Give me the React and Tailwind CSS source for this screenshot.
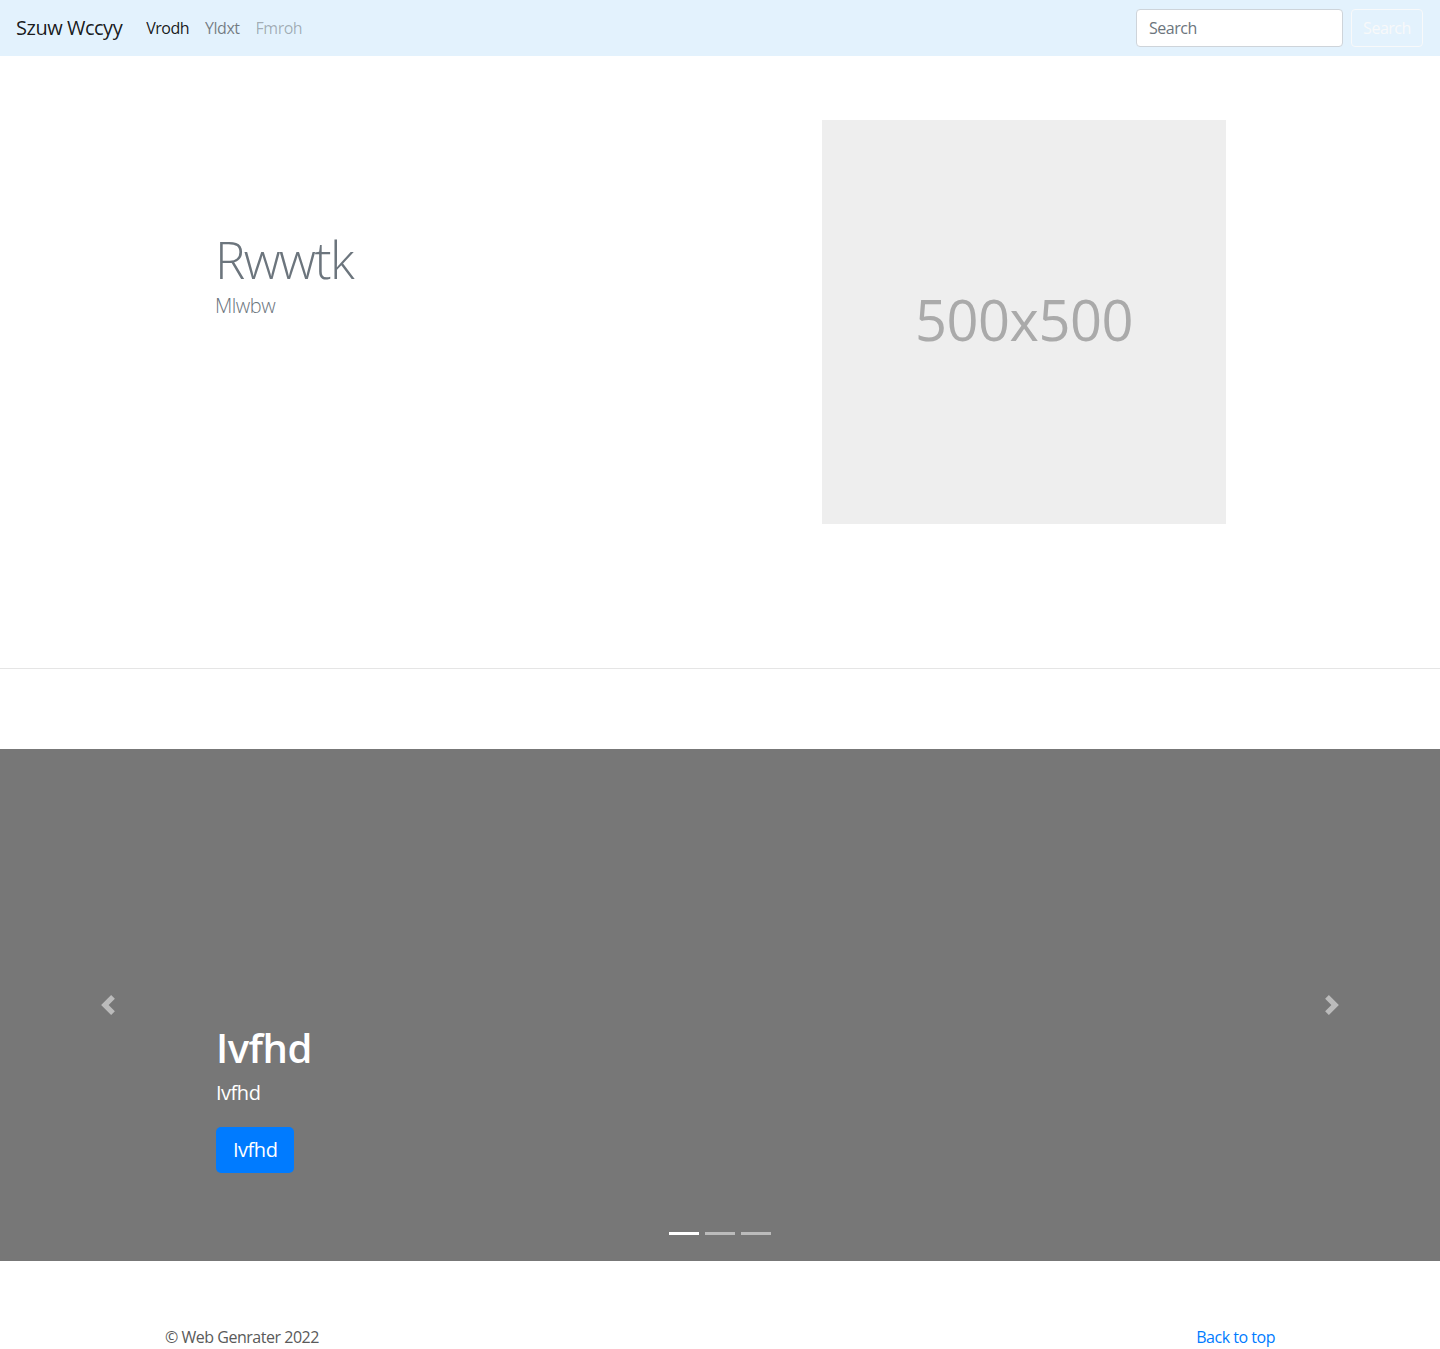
import React from 'react'

const font = { fontFamily: '"Open Sans", "Noto Sans", Arial, sans-serif' }

function Navbar() {
  return (
    <nav className="flex h-14 items-center bg-[#e3f2fd] pl-4 pr-[17px]">
      <a href="#" className="mr-4 text-[20px] leading-[30px] text-black/90">
        Szuw Wccyy
      </a>
      <ul className="flex items-center text-[16px] leading-6">
        <li><a href="#" className="block px-2 py-2 text-black/90">Vrodh</a></li>
        <li><a href="#" className="block px-2 py-2 text-black/50">Yldxt</a></li>
        <li><a href="#" className="block px-2 py-2 text-black/30">Fmroh</a></li>
      </ul>
      <form className="ml-auto flex items-center">
        <input
          type="search"
          placeholder="Search"
          className="mr-2 h-[38px] w-[207px] rounded border border-[#ced4da] bg-white px-3 text-[16px] text-[#495057] placeholder:text-[#6c757d] outline-none"
        />
        <button
          type="button"
          className="h-[38px] w-[72px] rounded border border-[#f8f9fa] text-[16px] text-[#f8f9fa]"
        >
          Search
        </button>
      </form>
    </nav>
  )
}

function Hero() {
  return (
    <section className="pt-16 pb-[144px]">
      <div className="mx-auto grid max-w-[1140px] grid-cols-2">
        <div className="pl-[65px] pt-[111px]">
          <h1 className="text-[51px] font-light leading-[56px] tracking-[-0.03em] text-[#6c757d]">Rwwtk</h1>
          <p className="mt-[4px] text-[20px] font-light leading-[30px] text-[#6c757d]">Mlwbw</p>
        </div>
        <div className="pl-[102px]">
          <div className="flex h-[404px] w-[404px] items-center justify-center bg-[#eee] pb-[6px]">
            <span className="text-[56px] leading-none text-[#aaa]">500x500</span>
          </div>
        </div>
      </div>
    </section>
  )
}

function Chevron({ dir }) {
  const d = dir === 'prev'
    ? 'M5.25 0l-4 4 4 4 1.5-1.5L4.25 4l2.5-2.5L5.25 0z'
    : 'M2.75 0l-1.5 1.5L3.75 4l-2.5 2.5L2.75 8l4-4-4-4z'
  return (
    <svg viewBox="0 0 8 8" className="h-5 w-5" fill="#fff">
      <path d={d} />
    </svg>
  )
}

function Carousel() {
  return (
    <section className="relative mt-20 flex h-[512px] flex-col justify-end bg-[#777] pb-[88px] pl-[216px]">
      <a href="#" className="absolute left-0 top-0 flex h-full w-[216px] items-center justify-center opacity-50">
        <Chevron dir="prev" />
      </a>
      <a href="#" className="absolute right-0 top-0 flex h-full w-[216px] items-center justify-center opacity-50">
        <Chevron dir="next" />
      </a>
      <div className="relative text-white">
        <h1 className="mb-[6px] text-[40px] font-semibold leading-[48px]">Ivfhd</h1>
        <p className="mb-[19px] text-[20px] leading-[30px]">Ivfhd</p>
        <a href="#" className="inline-block rounded-[5px] bg-[#007bff] px-[17px] py-[8px] text-[20px] leading-[30px] text-white">
          Ivfhd
        </a>
      </div>
      <ol className="absolute bottom-[26px] left-0 right-0 flex justify-center gap-[6px]">
        <li className="h-[3px] w-[30px] bg-white" />
        <li className="h-[3px] w-[30px] bg-white/50" />
        <li className="h-[3px] w-[30px] bg-white/50" />
      </ol>
    </section>
  )
}

function Footer() {
  return (
    <footer className="mx-auto flex max-w-[1140px] justify-between px-[15px] pt-16 pb-8 text-[16px] leading-6">
      <p className="text-[#5a5a5a]">© Web Genrater 2022</p>
      <a href="#" className="text-[#007bff]">Back to top</a>
    </footer>
  )
}

export default function App() {
  return (
    <div className="min-h-screen bg-white tracking-[-0.03em] text-[#5a5a5a]" style={font}>
      <Navbar />
      <Hero />
      <hr className="border-t border-black/10" />
      <Carousel />
      <Footer />
    </div>
  )
}
